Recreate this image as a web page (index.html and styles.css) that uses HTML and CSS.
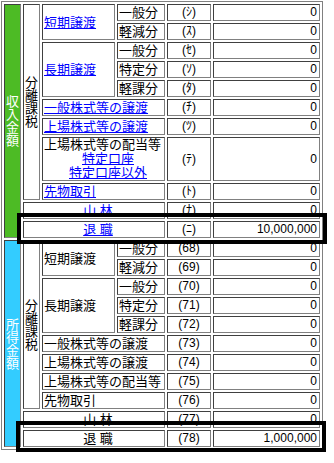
FILE: index.html
```html
<!DOCTYPE html>
<html lang="ja">
<head>
<meta charset="utf-8">
<title>分離課税</title>
<link rel="stylesheet" href="styles.css">
</head>
<body>
<div class="wrap">
<table class="tax">
<colgroup>
<col class="c1"><col class="c2"><col class="c3"><col class="c4"><col class="c5"><col class="c6">
</colgroup>
<tbody>
<tr>
<td rowspan="11" class="vlabel income">収入金額</td>
<td rowspan="9" class="vtext">分離課税</td>
<td rowspan="2" class="lbl"><a href="#">短期譲渡</a></td>
<td class="sub">一般分</td>
<td class="code">(ｼ)</td>
<td class="val">0</td>
</tr>
<tr>
<td class="sub">軽減分</td>
<td class="code">(ｽ)</td>
<td class="val">0</td>
</tr>
<tr>
<td rowspan="3" class="lbl"><a href="#">長期譲渡</a></td>
<td class="sub">一般分</td>
<td class="code">(ｾ)</td>
<td class="val">0</td>
</tr>
<tr>
<td class="sub">特定分</td>
<td class="code">(ｿ)</td>
<td class="val">0</td>
</tr>
<tr>
<td class="sub">軽課分</td>
<td class="code">(ﾀ)</td>
<td class="val">0</td>
</tr>
<tr>
<td colspan="2" class="lbl"><a href="#">一般株式等の譲渡</a></td>
<td class="code">(ﾁ)</td>
<td class="val">0</td>
</tr>
<tr>
<td colspan="2" class="lbl"><a href="#">上場株式等の譲渡</a></td>
<td class="code">(ﾂ)</td>
<td class="val">0</td>
</tr>
<tr>
<td colspan="2" class="lbl multi">
<div>上場株式等の配当等</div>
<div class="ctr"><a href="#">特定口座</a></div>
<div class="ctr"><a href="#">特定口座以外</a></div>
</td>
<td class="code">(ﾃ)</td>
<td class="val">0</td>
</tr>
<tr>
<td colspan="2" class="lbl"><a href="#">先物取引</a></td>
<td class="code">(ﾄ)</td>
<td class="val">0</td>
</tr>
<tr>
<td colspan="3" class="wide"><a href="#">山 林</a></td>
<td class="code">(ﾅ)</td>
<td class="val">0</td>
</tr>
<tr>
<td colspan="3" class="wide"><a href="#">退 職</a></td>
<td class="code">(ﾆ)</td>
<td class="val">10,000,000</td>
</tr>

<tr>
<td rowspan="11" class="vlabel income2">所得金額</td>
<td rowspan="9" class="vtext">分離課税</td>
<td rowspan="2" class="lbl">短期譲渡</td>
<td class="sub">一般分</td>
<td class="code">(68)</td>
<td class="val">0</td>
</tr>
<tr>
<td class="sub">軽減分</td>
<td class="code">(69)</td>
<td class="val">0</td>
</tr>
<tr>
<td rowspan="3" class="lbl">長期譲渡</td>
<td class="sub">一般分</td>
<td class="code">(70)</td>
<td class="val">0</td>
</tr>
<tr>
<td class="sub">特定分</td>
<td class="code">(71)</td>
<td class="val">0</td>
</tr>
<tr>
<td class="sub">軽課分</td>
<td class="code">(72)</td>
<td class="val">0</td>
</tr>
<tr>
<td colspan="2" class="lbl">一般株式等の譲渡</td>
<td class="code">(73)</td>
<td class="val">0</td>
</tr>
<tr>
<td colspan="2" class="lbl">上場株式等の譲渡</td>
<td class="code">(74)</td>
<td class="val">0</td>
</tr>
<tr>
<td colspan="2" class="lbl">上場株式等の配当等</td>
<td class="code">(75)</td>
<td class="val">0</td>
</tr>
<tr>
<td colspan="2" class="lbl">先物取引</td>
<td class="code">(76)</td>
<td class="val">0</td>
</tr>
<tr>
<td colspan="3" class="wide">山 林</td>
<td class="code">(77)</td>
<td class="val">0</td>
</tr>
<tr>
<td colspan="3" class="wide">退 職</td>
<td class="code">(78)</td>
<td class="val">1,000,000</td>
</tr>
</tbody>
</table>
<div class="mark mark1"></div>
<div class="mark mark2"></div>
</div>
</body>
</html>
```
FILE: styles.css
```css
html, body {
  margin: 0;
  padding: 0;
  background: #ffffff;
}

body {
  font-family: "Liberation Sans", "Noto Sans CJK JP", sans-serif;
  font-size: 13px;
  color: #000000;
}

.wrap {
  position: relative;
  width: 334px;
  height: 463px;
}

.tax {
  margin: 1px 0 0 1px;
  width: 322px;
  table-layout: fixed;
  border-collapse: separate;
  border-spacing: 2px;
  border: 1px solid #808080;
}

.c1 { width: 17px; }
.c2 { width: 17px; }
.c3 { width: 73px; }
.c4 { width: 48px; }
.c5 { width: 44px; }
.c6 { width: 107px; }

.tax td {
  padding: 0;
  border: 1px solid;
  border-color: #404040 #808080 #808080 #404040;
  line-height: 15px;
  vertical-align: middle;
  white-space: nowrap;
  overflow: hidden;
}

.tax a {
  color: #0000ff;
  text-decoration: underline;
}

.tax td.vlabel,
.tax td.vtext {
  white-space: normal;
  line-height: 13px;
  text-align: center;
}

.tax td.vlabel {
  color: #ffffff;
}

.tax td.income {
  background: #4dbb25;
}

.tax td.income2 {
  background: #33ccff;
}

.tax td.lbl,
.tax td.sub {
  padding-left: 1px;
  text-align: left;
}

.tax td.multi {
  line-height: 14px;
}

.multi .ctr {
  text-align: center;
  padding-left: 8px;
}

.tax td.wide {
  text-align: center;
  padding-left: 8px;
}

.tax td.code {
  text-align: center;
  font-size: 12px;
}

.tax td.val {
  text-align: right;
  padding-right: 2px;
  font-size: 12px;
}

.mark {
  position: absolute;
  box-sizing: border-box;
  border: 4px solid #000000;
  width: 310px;
  height: 31px;
}

.mark1 {
  left: 17px;
  top: 212px;
}

.mark2 {
  left: 16px;
  top: 420px;
}
```
